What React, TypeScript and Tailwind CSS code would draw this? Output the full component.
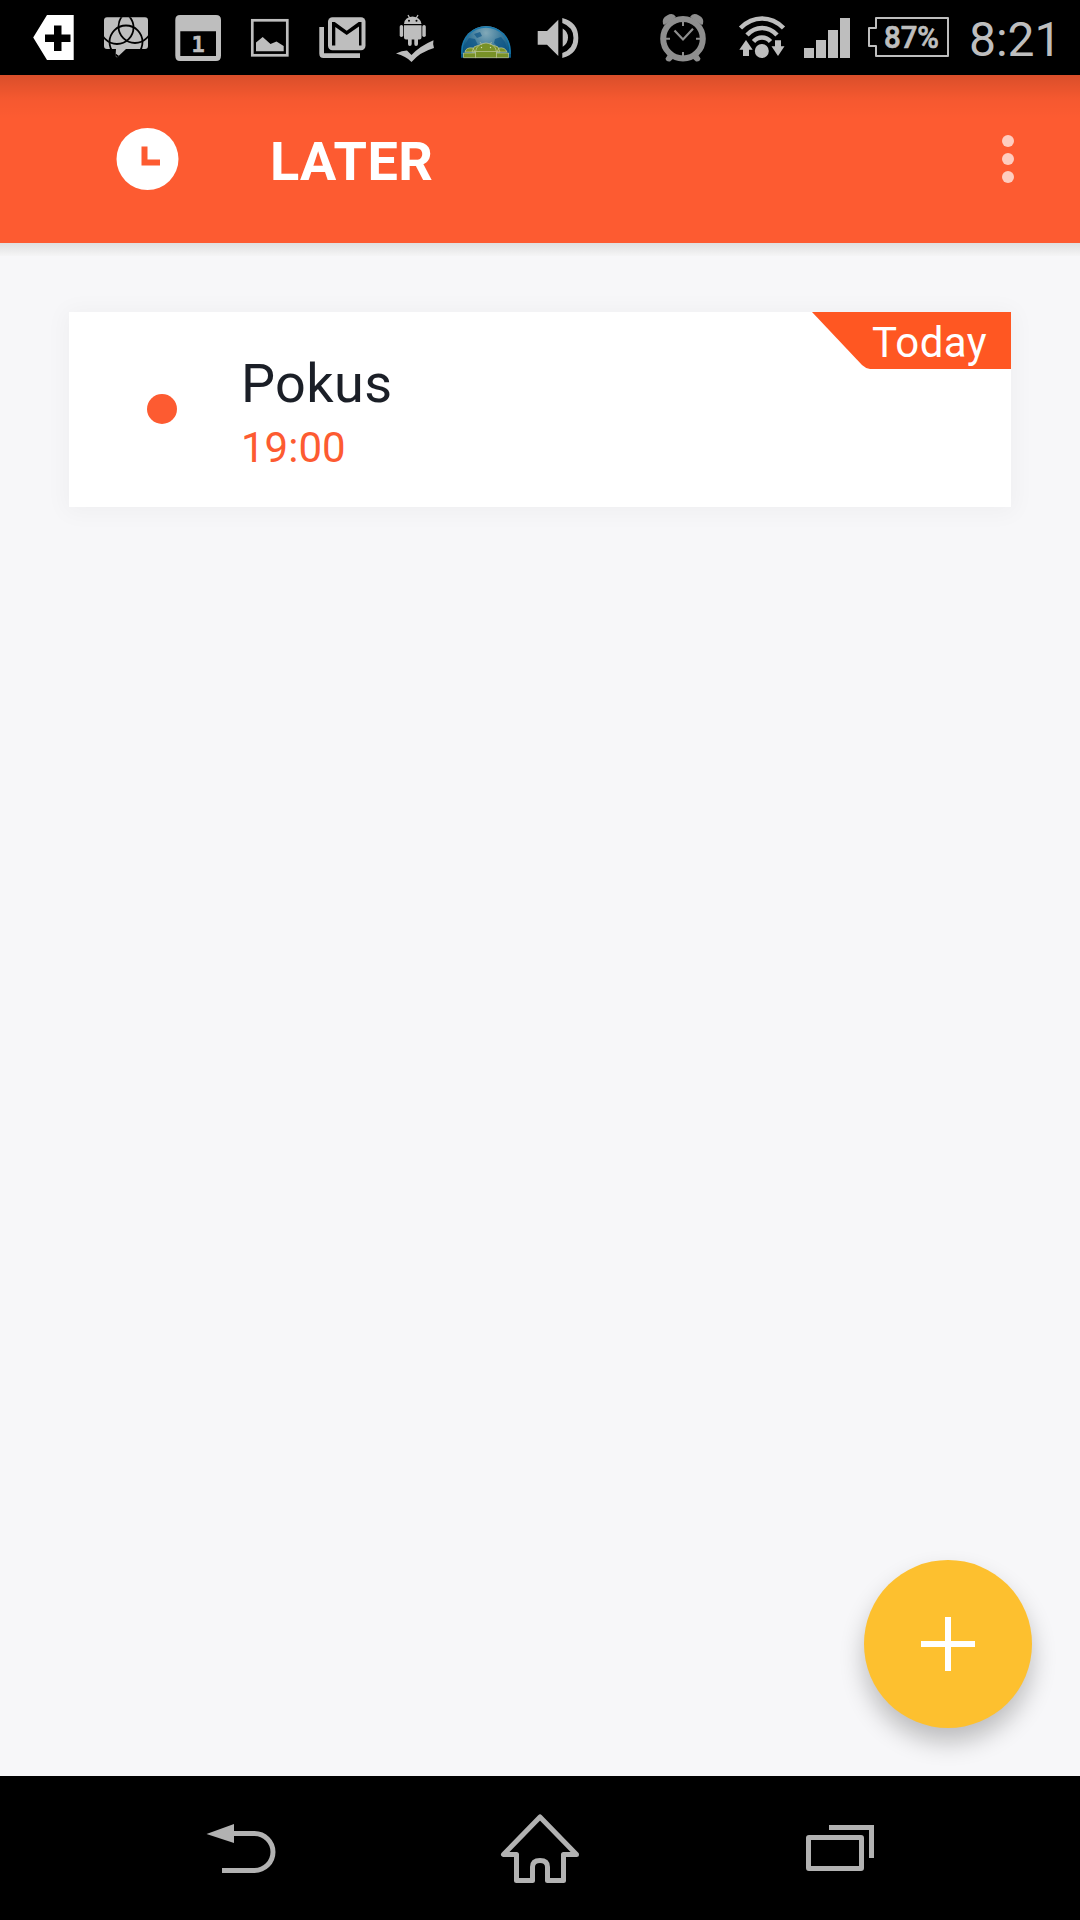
import { ReactNode } from "react"

interface BarIconProps {
  x: number
  width: number
  height?: number
  className?: string
  children: ReactNode
}

// Status and navigation glyphs share the coordinates of the bar they sit in
function BarIcon({ x, width, height = 75, className, children }: BarIconProps) {
  return (
    <svg
      className={className ?? "shrink-0 fill-[#bebebe]"}
      width={width}
      height={height}
      viewBox={`${x} 0 ${width} ${height}`}
    >
      {children}
    </svg>
  )
}

function NotificationIcons() {
  return (
    <>
      <BarIcon x={0} width={89}>
        <path
          fill="#fff"
          fillRule="evenodd"
          d="M47 15H73.7V60H47L33.2 37.5ZM54 25.5V34.5H45V42H54V51H61.5V42H70.5V34.5H61.5V25.5Z"
        />
      </BarIcon>
      <BarIcon x={89} width={72}>
        <clipPath id="bubble">
          <path d="M107 17.3H145Q148 17.3 148 20.5V46Q148 49 145 49H126L117 57.5L115.5 56L116 49H107Q104 49 104 46V20.5Q104 17.3 107 17.3Z" />
        </clipPath>
        <g clipPath="url(#bubble)">
          <rect x="104" y="17" width="44" height="41" />
          <g fill="none" stroke="#000" strokeWidth="1.8">
            <circle cx="117" cy="27.5" r="16.5" />
            <circle cx="135" cy="26.5" r="16.5" />
            <circle cx="126" cy="42" r="16.5" />
          </g>
          <path d="M114 54.5L118 56" stroke="#000" strokeWidth="1.5" />
        </g>
      </BarIcon>
      <BarIcon x={161} width={74}>
        <path
          fillRule="evenodd"
          d="M180 15H216Q221 15 221 20V55.5Q221 61 216 61H180Q175.300 61 175.300 55.5V20Q175.300 15 180 15ZM180.300 31.300V56H216V31.300Z"
        />
        <text
          x="198"
          y="52"
          textAnchor="middle"
          fontSize="22"
          fontWeight="700"
          fontFamily="DejaVu Sans Mono, monospace"
          stroke="#bebebe"
          strokeWidth="0.5"
        >
          1
        </text>
      </BarIcon>
      <BarIcon x={235} width={68}>
        <rect x="252.3" y="20.3" width="35" height="35" fill="none" stroke="#bebebe" strokeWidth="2.7" />
        <path d="M256 42.5L262.7 37L270.5 44L276.5 41.5L283.7 46V51.2H256Z" />
      </BarIcon>
      <BarIcon x={303} width={77}>
        <path d="M319.300 27H324V53.300H360V58H323.5Q319.300 58 319.300 53.5Z" />
        <rect x="328" y="17.3" width="37.5" height="33" rx="4.5" />
        <path fill="#000" d="M332 22H334.700L346.700 30.700L358.700 22H361.5V45.5H359V26.5L346.700 35L335.300 27V45.5H332Z" />
      </BarIcon>
      <BarIcon x={380} width={67}>
        <path d="M404 24Q404.5 17 412.5 16.5Q420.5 17 421.5 24Z" />
        <path d="M408 15L410 18.5M418 15L416 18.5" stroke="#bebebe" strokeWidth="1.3" />
        <circle cx="409" cy="20.7" r="1" fill="#000" />
        <circle cx="416.5" cy="20.7" r="1" fill="#000" />
        <path d="M404 25.300H421.5V37.5Q421.5 39.5 419.5 39.5H418V44Q418 46 416 46Q414.300 46 414.300 44V39.5H411.700V44Q411.700 46 409.800 46Q408 46 408 44V39.5H406Q404 39.5 404 37.5Z" />
        <rect x="399.7" y="25" width="3.5" height="12" rx="1.7" />
        <rect x="422.3" y="25" width="3.5" height="12" rx="1.7" />
        <path d="M396 53.5Q402 50.5 407 50.5L411.5 55Q420 46 433.5 40.300Q432.5 44 434 48Q420 52 411.5 62Q406 56 396 53.5Z" />
      </BarIcon>
      <BarIcon x={447} width={77}>
        <defs>
          <radialGradient id="globe" gradientUnits="userSpaceOnUse" cx="486" cy="33" r="28">
            <stop offset="0" stopColor="#82a9b8" />
            <stop offset="0.5" stopColor="#437f9e" />
            <stop offset="1" stopColor="#085582" />
          </radialGradient>
        </defs>
        <path fill="url(#globe)" d="M461 57.700V51A25 25 0 0 1 511 51V57.700Z" />
        <path fill="none" stroke="#1879ae" strokeWidth="1.3" d="M462 54V51A24 24 0 0 1 510 51V54" />
        <path fill="#0d5486" opacity="0.7" d="M464 46L469 38L475 39L478 45L473 50L466 50ZM495 39L501 37L505 42L508 51L500 49L494 43ZM474 34L480 32L482 36L477 38Z" />
        <g fill="#789127" stroke="#c3c99c" strokeWidth="0.7">
          <path d="M463.5 57.700V53H476V57.700ZM465 52Q466 47 473 48L475 52ZM472 52L474 47Q478 44 481 47L477 52Z" />
          <path d="M496 57.700V53H508.5V57.700ZM507 52Q505 47 499 48L497 52ZM500 52L498 47Q494 44 490 47L495 52Z" />
          <path d="M475.5 57.700V51.5Q477 43.5 486 43Q495 43.5 496.5 51.5V57.700Z" />
          <path d="M475.5 51.5H496.5M480 42L482 45M491.5 42L490 45" />
        </g>
        <circle cx="481.5" cy="47.5" r="0.7" fill="#d4dcae" />
        <circle cx="490.5" cy="47.5" r="0.7" fill="#d4dcae" />
      </BarIcon>
      <BarIcon x={524} width={76}>
        <path d="M537.700 31H547L558.300 19.700V56L547 44.700H537.700ZM562.700 28.5Q568 31.5 568 37.5Q568 43.5 562.700 46.700ZM562.300 18Q578.300 22 578.300 38Q578.300 54 562.300 58V53Q573.5 49 573.5 38Q573.5 27 562.300 23Z" />
      </BarIcon>
    </>
  )
}

function SystemIcons() {
  return (
    <>
      <BarIcon x={640} width={82} className="ml-auto shrink-0 fill-[#8e8e8e] stroke-[#8e8e8e]">
        <g stroke="none">
          <path d="M663 24Q661.5 18 667 15.5Q673 12 676 17L664 25ZM703 24Q704.5 18 699 15.5Q693 12 690 17L702 25Z" />
          <path d="M669 53L665.5 58.5Q666 62 670 61.5L675 57ZM697 53L700.5 58.5Q700 62 696 61.5L691 57Z" />
        </g>
        <circle cx="683" cy="38.7" r="19.8" fill="#000" strokeWidth="6" />
        <path d="M683 22V26M683 52V56M666 38.800H670M696 38.800H700" strokeWidth="2" />
        <path fill="none" strokeWidth="2.2" d="M674.5 30.5L683 39.5L693 28.800" />
      </BarIcon>
      <BarIcon x={722} width={73}>
        <g fill="none" stroke="#bebebe" strokeWidth="4.5">
          <path d="M740.5 28Q750 18.5 762 18.5Q774 18.5 783.5 28" />
          <path d="M747 35Q753.5 28 762 28Q770.5 28 777 35" />
          <path d="M753.5 41.5Q757 37.5 762 37.5Q767 37.5 770.5 41.5" />
        </g>
        <circle cx="761.8" cy="51" r="7" />
        <path d="M746 40L752.700 49.700H749V56H743V49.700H739.300ZM775 40.300H781V46.300H784.5L778 56L771.5 46.300H775Z" />
      </BarIcon>
      <BarIcon x={795} width={64}>
        <path d="M804 48H814V58H804ZM816 40H826V58H816ZM828 30H838V58H828ZM840 18H850V58H840Z" />
      </BarIcon>
      <BarIcon x={859} width={109}>
        <path
          fill="none"
          stroke="#bebebe"
          strokeWidth="2"
          strokeLinejoin="round"
          d="M876 18H948V56H876V46H869V28H876Z"
        />
        <text
          x="911.5"
          y="48"
          textAnchor="middle"
          fontSize="31"
          fontWeight="500"
          textLength="55"
          lengthAdjust="spacingAndGlyphs"
          fontFamily="Roboto, sans-serif"
          stroke="#bebebe"
          strokeWidth="0.7"
        >
          87%
        </text>
      </BarIcon>
    </>
  )
}

function StatusBar() {
  return (
    <div className="flex h-[75px] shrink-0 bg-black">
      <NotificationIcons />
      <SystemIcons />
      <span className="w-28 pt-1 pl-px text-5xl leading-[72px] text-[#bebebe]">8:21</span>
    </div>
  )
}

function Header() {
  return (
    <header className="flex h-[168px] shrink-0 items-center bg-[#fd5b31] bg-[linear-gradient(to_bottom,rgba(0,0,0,0.14),rgba(0,0,0,0.03)_24px,transparent_44px)] pr-16 pl-[116px]">
      <svg className="size-[63px]" viewBox="0 0 63 63">
        <circle cx="31.5" cy="31" r="31" fill="#fff" />
        <path fill="#fd5b31" d="M25.5 18.5H31.5V31.5H44V37.5H25.5Z" />
      </svg>
      <h1 className="ml-[91px] pt-1.5 text-[54px] leading-[64px] font-bold tracking-[0.4px] text-white">
        LATER
      </h1>
      <div className="ml-auto flex flex-col gap-1.5 pr-0.5">
        <span className="size-3 rounded-full bg-[#fecdc0]" />
        <span className="size-3 rounded-full bg-[#fecdc0]" />
        <span className="size-3 rounded-full bg-[#fecdc0]" />
      </div>
    </header>
  )
}

function TaskCard() {
  return (
    <div className="relative mx-[69px] mt-[69px] flex h-[195px] bg-white shadow-[0_2px_22px_4px_rgba(0,0,0,0.035)]">
      <span className="mt-[82px] ml-[78px] size-[30px] rounded-full bg-[#fd5b31]" />
      <div className="ml-[64px] pt-10">
        <p className="text-[54px] leading-[64px] tracking-[0.4px] text-[#1b1f27]">Pokus</p>
        <p className="text-[42px] leading-[64px] text-[#fd5b31]">19:00</p>
      </div>
      <div className="absolute top-0 right-0 h-[57px] w-[199px]">
        <svg className="absolute inset-0" width="199" height="57" viewBox="0 0 199 57">
          <path fill="#ff5722" d="M0 0H199V57H58Q53 56 50 53Z" />
        </svg>
        <span className="relative block pt-1.5 pr-6 text-right text-[42px] leading-[50px] tracking-[0.4px] text-white">
          Today
        </span>
      </div>
    </div>
  )
}

function NavigationBar() {
  const className = "fill-none stroke-[#b2b2b2] stroke-[5]"

  return (
    <nav className="flex h-36 shrink-0 justify-center bg-black">
      <BarIcon x={90} width={300} height={144} className={className}>
        <path d="M232 57.5H254.5A18.5 18.5 0 0 1 254.5 94.5H222" />
        <path className="fill-[#b2b2b2] stroke-none" d="M206.5 58L234 48V67Z" />
      </BarIcon>
      <BarIcon x={390} width={300} height={144} className={className}>
        <path
          strokeLinejoin="round"
          d="M540 41L503.5 78.5H516.5V104.5H532.5V91Q532.5 84.5 540 84.5Q547.5 84.5 547.5 91V104.5H563.5V78.5H576.5Z"
        />
      </BarIcon>
      <BarIcon x={690} width={300} height={144} className={className}>
        <rect x="808.5" y="61.5" width="53" height="31" rx="0.5" />
        <path d="M829 51.5H871.5V82" />
      </BarIcon>
    </nav>
  )
}

export default function App() {
  return (
    <div className="flex h-[1920px] w-[1080px] flex-col overflow-hidden bg-[#f7f7f9] font-['Roboto',sans-serif]">
      <StatusBar />
      <Header />
      <main className="relative flex-1">
        <div className="flex h-full flex-col">
          <div className="-mb-[13px] h-[13px] shrink-0 bg-linear-to-b from-[#dfdfdf] to-[#f5f5f6]" />
          <TaskCard />
        </div>
        <button className="absolute right-12 bottom-12 flex size-[168px] items-center justify-center rounded-full bg-[#fdc02f] shadow-[0_14px_24px_rgba(0,0,0,0.24)]">
          <svg className="size-[54px]" viewBox="0 0 54 54">
            <path fill="#fff" d="M24 0H30V24H54V30H30V54H24V30H0V24H24Z" />
          </svg>
        </button>
      </main>
      <NavigationBar />
    </div>
  )
}
